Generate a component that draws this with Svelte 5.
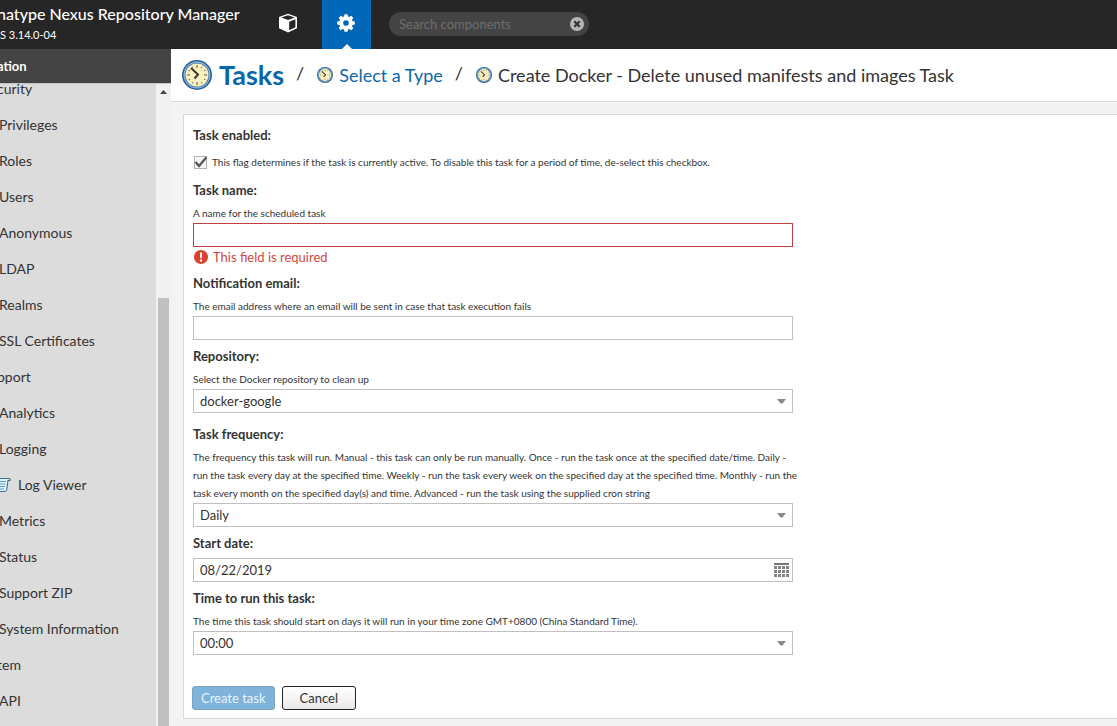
<script>
  const menu = [
    { label: 'curity', group: true },
    { label: 'Privileges' },
    { label: 'Roles' },
    { label: 'Users' },
    { label: 'Anonymous' },
    { label: 'LDAP' },
    { label: 'Realms' },
    { label: 'SSL Certificates' },
    { label: 'pport', group: true },
    { label: 'Analytics' },
    { label: 'Logging' },
    { label: 'Log Viewer', icon: true },
    { label: 'Metrics' },
    { label: 'Status' },
    { label: 'Support ZIP' },
    { label: 'System Information' },
    { label: 'tem', group: true },
    { label: 'API' }
  ];
  const ticks = [0, 30, 60, 90, 120, 150, 180, 210, 240, 270, 300, 330];

  let enabled = $state(true);
  let taskName = $state('');
  let email = $state('');
  let repository = $state('docker-google');
  let frequency = $state('Daily');
  let startDate = $state('08/22/2019');
  let startTime = $state('00:00');
</script>

{#snippet clock(size)}
  <svg class="clock" width={size} height={size} viewBox="0 0 30 30" aria-hidden="true">
    <circle cx="15" cy="15" r="15" fill="#2b5f97" />
    <circle cx="15" cy="15" r="13.4" fill="#8fbbe2" />
    <circle cx="15" cy="15" r="12.3" fill="#3d6f9f" />
    <circle cx="15" cy="15" r="11.5" fill="#fbf0c0" />
    {#each ticks as angle}
      <path
        d={angle % 90 === 0 ? 'M15 5v3' : 'M15 5.4v1.2'}
        transform="rotate({angle} 15 15)"
        stroke="#55564c"
        stroke-width="1"
      />
    {/each}
    <path d="M9 8l7 6.5-3.5 4" fill="none" stroke="#38352b" stroke-width="1.9" />
  </svg>
{/snippet}

{#snippet arrow()}
  <svg class="arrow" width="9" height="5" viewBox="0 0 9 5" aria-hidden="true">
    <path d="M0 0h9L5.500 4.500h-2z" fill="#8b8b8b" />
  </svg>
{/snippet}

<div class="app">
  <header class="topbar">
    <div class="brand">
      <div class="product">natype Nexus Repository Manager</div>
      <div class="version">S 3.14.0-04</div>
    </div>
    <nav class="modes">
      <button type="button" class="mode" aria-label="Browse">
        <svg width="20" height="20" viewBox="0 0 20 20" aria-hidden="true">
          <path d="M10 .8l9 3.3v11.1l-9 4.2-9-4.2V4.1z" fill="#fff" />
          <path d="M3.3 4.500L10 2.300l6.700 2.200L10 7z" fill="#262626" />
          <path d="M11.200 8.700l6.200-2.500v8l-6.200 3.100z" fill="#262626" />
        </svg>
      </button>
      <button type="button" class="mode active" aria-label="Administration">
        <svg width="18" height="18" viewBox="0 0 18 18" aria-hidden="true">
          <g fill="#fff">
            <circle cx="9" cy="9" r="6.700" />
            {#each [0, 45, 90, 135] as angle}
              <path d="M7.200 1.200Q7.300.2 8 .2h2q.7 0 .8 1l.5 3h-4.600zM7.200 16.800q.1 1 .8 1h2q.7 0 .8-1l.5-3h-4.600z" transform="rotate({angle} 9 9)" />
            {/each}
          </g>
          <circle cx="9" cy="9" r="2.800" fill="#0067b9" />
        </svg>
      </button>
    </nav>
    <div class="search">
      <input type="text" placeholder="Search components" aria-label="Search components" />
      <button type="button" aria-label="Clear search">
        <svg width="14" height="14" viewBox="0 0 14 14" aria-hidden="true">
          <circle cx="7" cy="7" r="7" fill="#b5b5b5" />
          <path d="M4.300 4.300l5.400 5.400M9.700 4.300l-5.400 5.400" stroke="#333" stroke-width="2.200" />
        </svg>
      </button>
    </div>
  </header>

  <div class="body">
    <aside class="sidebar">
      <h2>ation</h2>
      <div class="scroller">
        <ul>
          {#each menu as item}
            <li class:group={item.group}>
              <a href="#menu">
                {#if item.icon}
                  <svg width="12" height="16" viewBox="0 0 12 16" aria-hidden="true">
                    <path d="M0 1.500h9.500L7.500 14H0z" fill="#e4f5fb" />
                    <path d="M0 1.500h10q1.500 0 1 2H9L7.700 12.500Q7.300 14.500 5.500 14.500H0" fill="none" stroke="#38708c" stroke-width="1.100" />
                    <path d="M0 4.500h7M0 7h6.500M0 9.500h6M0 12h5" stroke="#4d9cc0" stroke-width="1" />
                  </svg>
                {/if}
                {item.label}
              </a>
            </li>
          {/each}
        </ul>
        <div class="track">
          <svg width="7" height="4" viewBox="0 0 7 4" aria-hidden="true"><path d="M3.500 0L7 4H0z" fill="#444" /></svg>
          <div class="thumb"></div>
        </div>
      </div>
    </aside>

    <main>
      <nav class="crumbs">
        <a class="root" href="#tasks">{@render clock(30)}Tasks</a>
        <span class="sep">/</span>
        <a href="#type">{@render clock(16)}Select a Type</a>
        <span class="sep">/</span>
        <span class="current">{@render clock(16)}Create Docker - Delete unused manifests and images Task</span>
      </nav>

      <form class="card" onsubmit={(e) => e.preventDefault()}>
        <div class="field enabled">
          <label for="enabled">Task enabled:</label>
          <div class="check">
            <span class="box">
              <input id="enabled" type="checkbox" bind:checked={enabled} />
              {#if enabled}
                <svg width="14" height="13" viewBox="0 0 14 13" aria-hidden="true">
                  <path d="M1.500 6l3.500 4L12.500 1.200" fill="none" stroke="#595959" stroke-width="2.400" />
                </svg>
              {/if}
            </span>
            <span class="help">This flag determines if the task is currently active. To disable this task for a period of time, de-select this checkbox.</span>
          </div>
        </div>

        <div class="field">
          <label for="name">Task name:</label>
          <p class="help">A name for the scheduled task</p>
          <input id="name" class="control invalid" type="text" aria-describedby="name-error" bind:value={taskName} />
          <div class="error" id="name-error">
            <svg width="14" height="14" viewBox="0 0 14 14" aria-hidden="true">
              <circle cx="7" cy="7" r="7" fill="#d8432f" />
              <path d="M5.900 2.500h2.200L7.700 8.300H6.300z" fill="#fff" />
              <circle cx="7" cy="10.500" r="1.200" fill="#fff" />
            </svg>
            This field is required
          </div>
        </div>

        <div class="field">
          <label for="email">Notification email:</label>
          <p class="help">The email address where an email will be sent in case that task execution fails</p>
          <input id="email" class="control" type="text" bind:value={email} />
        </div>

        <div class="field repository">
          <label for="repository">Repository:</label>
          <p class="help">Select the Docker repository to clean up</p>
          <div class="picker">
            <select id="repository" class="control" bind:value={repository}>
              <option>docker-google</option>
            </select>
            {@render arrow()}
          </div>
        </div>

        <div class="field">
          <label for="frequency">Task frequency:</label>
          <p class="help">The frequency this task will run. Manual - this task can only be run manually. Once - run the task once at the specified date/time. Daily - run the task every day at the specified time. Weekly - run the task every week on the specified day at the specified time. Monthly - run the task every month on the specified day(s) and time. Advanced - run the task using the supplied cron string</p>
          <div class="picker">
            <select id="frequency" class="control" bind:value={frequency}>
              <option>Daily</option>
            </select>
            {@render arrow()}
          </div>
        </div>

        <div class="field">
          <label for="date">Start date:</label>
          <div class="picker date">
            <input id="date" class="control" type="text" bind:value={startDate} />
            <svg class="calendar" width="15" height="14" viewBox="0 0 15 14" aria-hidden="true">
              <path d="M0 0h15v2H0z" fill="#777" />
              {#each [3, 7, 11] as y}
                {#each [0, 4, 8, 12] as x}
                  <rect {x} {y} width="3" height="3" fill="#858585" />
                {/each}
              {/each}
            </svg>
          </div>
        </div>

        <div class="field">
          <label for="time">Time to run this task:</label>
          <p class="help">The time this task should start on days it will run in your time zone GMT+0800 (China Standard Time).</p>
          <div class="picker">
            <select id="time" class="control" bind:value={startTime}>
              <option>00:00</option>
            </select>
            {@render arrow()}
          </div>
        </div>

        <div class="actions">
          <button type="submit" class="primary" disabled>Create task</button>
          <button type="button">Cancel</button>
        </div>
      </form>
    </main>
  </div>
</div>

<style>
  :global(body) {
    margin: 0;
  }
  .app {
    display: flex;
    flex-direction: column;
    height: 100vh;
    overflow: hidden;
    background: #f3f3f3;
    color: #333;
    font-family: Lato, 'Liberation Sans', sans-serif;
    font-size: 13px;
    line-height: 18px;
  }
  .app * {
    box-sizing: border-box;
  }
  svg {
    display: block;
    flex: none;
  }
  a {
    color: inherit;
    text-decoration: none;
  }
  button,
  input,
  select {
    margin: 0;
    font: inherit;
    color: inherit;
  }

  .topbar {
    display: flex;
    flex: none;
    height: 49px;
    background: #262626;
    color: #fff;
  }
  .brand {
    width: 264px;
    padding-top: 5px;
    white-space: nowrap;
  }
  .product {
    margin-left: -3px;
    font-size: 16px;
    font-weight: 500;
  }
  .version {
    margin-top: 3px;
    font-size: 11px;
  }
  .modes {
    display: flex;
    gap: 9px;
  }
  .mode {
    position: relative;
    display: grid;
    place-items: center;
    width: 49px;
    padding: 0 1px 3px 0;
    border: 0;
    background: none;
  }
  .mode.active {
    background: #0067b9;
  }
  .mode.active::after {
    content: '';
    position: absolute;
    bottom: 0;
    left: 50%;
    margin-left: -5px;
    border: 5px solid transparent;
    border-top: 0;
    border-bottom-color: #fff;
  }
  .search {
    display: flex;
    align-items: center;
    width: 200px;
    height: 24px;
    margin: 12px 0 0 18px;
    padding: 0 5px 0 10px;
    border-radius: 12px;
    background: #444;
  }
  .search input {
    flex: 1;
    min-width: 0;
    padding: 0;
    border: 0;
    outline: 0;
    background: none;
  }
  .search input::placeholder {
    color: #6e6e6e;
    opacity: 1;
  }
  .search button {
    padding: 0;
    border: 0;
    background: none;
  }

  .body {
    display: flex;
    flex: 1;
    min-height: 0;
  }
  .sidebar {
    display: flex;
    flex: none;
    flex-direction: column;
    width: 171px;
  }
  h2 {
    flex: none;
    height: 34px;
    margin: 0;
    background: #444;
    color: #fff;
    font-size: 13px;
    line-height: 34px;
    text-indent: -3px;
  }
  .scroller {
    display: flex;
    flex: 1;
    min-height: 0;
    overflow: hidden;
    border-top: 1px solid #c4c4c4;
  }
  ul {
    flex: 1;
    margin: -13px 0 0;
    padding: 0;
    background: #dcdcdc;
    font-size: 14px;
    list-style: none;
  }
  li a {
    display: flex;
    align-items: center;
    gap: 7px;
    height: 36px;
    margin-left: -1px;
    white-space: nowrap;
  }
  .group a {
    margin-left: -3px;
  }
  .track {
    display: flex;
    flex-direction: column;
    align-items: center;
    width: 15px;
    padding: 6px 2px 0;
    background: #f1f1f1;
  }
  .thumb {
    flex: 1;
    width: 11px;
    margin-top: 204px;
    background: #c0c0c0;
  }

  main {
    flex: 1;
    min-width: 0;
  }
  .crumbs {
    display: flex;
    align-items: center;
    height: 53px;
    padding: 0 0 0 11px;
    border-bottom: 1px solid #dadada;
    background: #fff;
    font-size: 18px;
    line-height: 24px;
    white-space: nowrap;
  }
  .crumbs a,
  .current {
    display: flex;
    align-items: center;
    gap: 6px;
  }
  .crumbs a {
    color: #0a66ab;
  }
  .crumbs .root {
    gap: 7px;
    font-size: 27px;
    font-weight: 700;
  }
  .sep {
    margin: 0 13px 4px 12px;
  }

  .card {
    margin: 12px 0 0 12px;
    padding: 11px 9px 8px;
    border: 1px solid #d8d8d8;
    border-right: 0;
    background: #fff;
  }
  .field {
    display: flex;
    flex-direction: column;
    max-width: 600px;
    margin-bottom: 7px;
  }
  .field > label {
    align-self: flex-start;
    margin-bottom: 5px;
    font-weight: 700;
  }
  .help {
    margin: 0 -6px 1px 0;
    font-size: 10px;
  }
  .enabled {
    margin-bottom: 9px;
  }
  .check {
    display: flex;
    align-items: center;
    gap: 4px;
    margin-top: 4px;
    white-space: nowrap;
  }
  .box {
    display: grid;
    align-items: center;
    width: 14px;
    margin-left: 1px;
  }
  .box > * {
    grid-area: 1 / 1;
  }
  .box svg {
    pointer-events: none;
  }
  .box input {
    width: 13px;
    height: 13px;
    appearance: none;
    border: 1px solid #b0b0b0;
    background: #f5f5f5;
  }
  .control {
    width: 100%;
    height: 24px;
    padding: 0 6px;
    appearance: none;
    border: 1px solid #c0c0c0;
    border-radius: 0;
    outline: 0;
    background: #fff;
  }
  .invalid {
    border-color: #c04040;
  }
  .error {
    display: flex;
    align-items: center;
    gap: 5px;
    margin: 1px 0;
    padding-left: 1px;
    color: #d1483b;
  }
  .repository {
    margin-bottom: 12px;
  }
  .picker {
    display: grid;
    align-items: center;
  }
  .picker > * {
    grid-area: 1 / 1;
  }
  .picker svg {
    justify-self: end;
    margin-right: 7px;
    pointer-events: none;
  }
  .picker .calendar {
    margin-right: 4px;
  }
  .date {
    margin-top: 1px;
  }
  .actions {
    display: flex;
    gap: 7px;
    margin: 31px 0 0 -1px;
  }
  .actions button {
    height: 24px;
    padding: 0 17px;
    border: 1px solid #222;
    border-radius: 3px;
    background: linear-gradient(#fff, #e9e9e9);
  }
  .actions .primary {
    padding: 0 8px;
    border-color: #7aa6c4;
    background: #7fb3da;
    color: #e8f3fb;
  }
</style>
